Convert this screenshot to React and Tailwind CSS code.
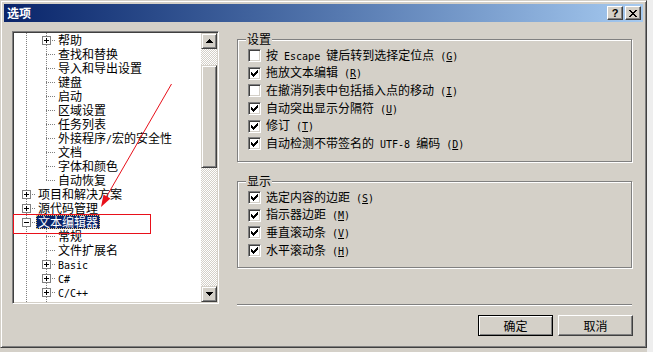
import React from "react";

const MONO = "font-['DejaVu_Sans_Mono',monospace] text-[10px] whitespace-pre";

function Mix({ text }) {
  const parts = text.split(/([\x20-\x7e]+)/).filter(Boolean);
  return parts.map((p, i) =>
    /^[\x20-\x7e]+$/.test(p) ? (
      <span key={i} className={MONO}>
        {p}
      </span>
    ) : (
      <span key={i}>{p}</span>
    )
  );
}

function Label({ text, k }) {
  return (
    <span className="whitespace-nowrap">
      <Mix text={text} />
      <span className={MONO}>
        {" ("}
        <u>{k}</u>
        {")"}
      </span>
    </span>
  );
}

function Cell({ type, box }) {
  const dot = { stroke: "#808080", strokeDasharray: "1 1" };
  return (
    <svg width="20" height="14" className="block shrink-0" shapeRendering="crispEdges">
      {(type === "line" || type === "tee") && <line x1="10.5" y1="0" x2="10.5" y2="14" {...dot} />}
      {type === "last" && <line x1="10.5" y1="0" x2="10.5" y2="8" {...dot} />}
      {(type === "tee" || type === "last") && <line x1="10" y1="7.5" x2="20" y2="7.5" {...dot} />}
      {box && (
        <>
          <rect x="6.5" y="3.5" width="8" height="8" fill="#fff" stroke="#808080" />
          <line x1="8" y1="7.5" x2="13" y2="7.5" stroke="#000" />
          {box === "plus" && <line x1="10.5" y1="5" x2="10.5" y2="10" stroke="#000" />}
        </>
      )}
    </svg>
  );
}

const rows = [
  { l: 2, t: "帮助", box: "plus" },
  { l: 2, t: "查找和替换" },
  { l: 2, t: "导入和导出设置" },
  { l: 2, t: "键盘" },
  { l: 2, t: "启动" },
  { l: 2, t: "区域设置" },
  { l: 2, t: "任务列表" },
  { l: 2, t: "外接程序/宏的安全性" },
  { l: 2, t: "文档" },
  { l: 2, t: "字体和颜色" },
  { l: 2, t: "自动恢复", last: true },
  { l: 1, t: "项目和解决方案", box: "plus" },
  { l: 1, t: "源代码管理", box: "plus" },
  { l: 1, t: "文本编辑器", box: "minus", sel: true },
  { l: 2, t: "常规" },
  { l: 2, t: "文件扩展名" },
  { l: 2, t: "Basic", box: "plus" },
  { l: 2, t: "C#", box: "plus" },
  { l: 2, t: "C/C++", box: "plus" },
  { l: 2, t: "CSS", box: "plus" },
];

const RAISED =
  "border border-t-[#d4d0c8] border-l-[#d4d0c8] border-r-[#404040] border-b-[#404040] shadow-[inset_1px_1px_0_#fff,inset_-1px_-1px_0_#808080] bg-[#d4d0c8]";
const BTN =
  "border border-t-white border-l-white border-r-[#404040] border-b-[#404040] shadow-[inset_-1px_-1px_0_#808080] bg-[#d4d0c8]";

function ScrollArrow({ up }) {
  return (
    <div className={`h-[16px] w-[16px] flex items-center justify-center ${RAISED}`}>
      <svg width="7" height="4" shapeRendering="crispEdges">
        {up ? <path d="M3 0h1v1h1v1h1v1h1v1H0V3h1V2h1V1h1z" /> : <path d="M0 0h7v1H6v1H5v1H4v1H3V3H2V2H1V1H0z" />}
      </svg>
    </div>
  );
}

function Tree() {
  return (
    <div className="ml-[8px] mt-[9px] w-[207px] h-[273px] flex border border-t-[#808080] border-l-[#808080] border-r-white border-b-white shadow-[inset_1px_1px_0_#404040,inset_-1px_-1px_0_#d4d0c8] p-[1px]">
      <div className="flex-1 bg-white overflow-hidden pl-[2px] flex flex-col">
        {rows.map((r, i) => {
          const cells =
            r.l === 1
              ? [<Cell key="a" type="tee" box={r.box} />]
              : [<Cell key="a" type="line" />, <Cell key="b" type={r.last ? "last" : "tee"} box={r.box} />];
          return (
            <div key={i} className="h-[14px] shrink-0 flex items-center">
              {cells}
              <span
                className={`h-[14px] leading-[14px] px-[2px] whitespace-nowrap ${
                  r.sel ? "bg-[#0a246a] text-white outline outline-1 outline-dotted outline-[#e8c070] -outline-offset-1" : "text-black"
                }`}
              >
                <Mix text={r.t} />
              </span>
            </div>
          );
        })}
      </div>
      <div className="w-[16px] flex flex-col">
        <ScrollArrow up />
        <div className="flex-1 bg-[repeating-conic-gradient(#d4d0c8_0_25%,#ffffff_0_50%)] bg-[length:2px_2px]">
          <div className={`mt-[16px] h-[103px] ${RAISED}`} />
        </div>
        <ScrollArrow />
      </div>
    </div>
  );
}

function Check({ on }) {
  return (
    <div className="w-[13px] h-[13px] shrink-0 bg-white border border-t-[#808080] border-l-[#808080] border-r-white border-b-white shadow-[inset_1px_1px_0_#404040,inset_-1px_-1px_0_#d4d0c8] flex items-center justify-center">
      {on && (
        <svg width="7" height="7" shapeRendering="crispEdges">
          <path d="M0 2h1v3H0zM1 3h1v3H1zM2 4h1v3H2zM3 3h1v3H3zM4 2h1v3H4zM5 1h1v3H5zM6 0h1v3H6z" fill="#000" />
        </svg>
      )}
    </div>
  );
}

function Group({ title, items, h, className = "" }) {
  return (
    <div
      className={`relative w-[395px] border border-[#808080] shadow-[inset_1px_1px_0_#fff,1px_1px_0_#fff] pt-[7px] pl-[10px] ${h} ${className}`}
    >
      <span className="absolute left-[8px] top-[-8px] px-[1px] bg-[#d4d0c8] leading-[14px]">{title}</span>
      <div className="flex flex-col">
        {items.map((it, i) => (
          <div key={i} className="h-[17.6px] flex items-center gap-[5px]">
            <Check on={it.on} />
            <span className="leading-[14px]">
              <Label text={it.t} k={it.k} />
            </span>
          </div>
        ))}
      </div>
    </div>
  );
}

const g1 = [
  { t: "按 Escape 键后转到选择定位点", k: "G", on: false },
  { t: "拖放文本编辑", k: "R", on: true },
  { t: "在撤消列表中包括插入点的移动", k: "I", on: false },
  { t: "自动突出显示分隔符", k: "U", on: true },
  { t: "修订", k: "T", on: true },
  { t: "自动检测不带签名的 UTF-8 编码", k: "D", on: true },
];
const g2 = [
  { t: "选定内容的边距", k: "S", on: true },
  { t: "指示器边距", k: "M", on: true },
  { t: "垂直滚动条", k: "V", on: true },
  { t: "水平滚动条", k: "H", on: true },
];

export default function App() {
  return (
    <div className="relative w-[653px] h-[352px] overflow-hidden flex bg-[#d4d0c8] font-['Noto_Sans_CJK_SC',sans-serif] text-[12px] text-black">
      <div className="w-[647px] h-[348px] shrink-0 flex flex-col p-[3px] bg-[#d4d0c8] border border-t-[#d4d0c8] border-l-[#d4d0c8] border-r-[#404040] border-b-[#404040] shadow-[inset_1px_1px_0_#fff,inset_-1px_-1px_0_#808080]">
        <div className="h-[18px] shrink-0 flex items-center pl-[3px] pr-[2px] bg-linear-to-r from-[#0a246a] to-[#a6caf0]">
          <span className="text-white font-bold leading-[14px]">选项</span>
          <div className="ml-auto flex gap-[2px]">
            <div className={`w-[16px] h-[14px] flex items-center justify-center ${BTN}`}>
              <span className="font-['Liberation_Sans',sans-serif] font-bold text-[11px] leading-[11px]">?</span>
            </div>
            <div className={`w-[16px] h-[14px] flex items-center justify-center ${BTN}`}>
              <svg width="8" height="7" shapeRendering="crispEdges">
                <path d="M0 0h2v1h1v1h2V1h1V0h2v1H7v1H6v1H5v1h1v1h1v1h1v1H6V6H5V5H3v1H2v1H0V6h1V5h1V4h1V3H2V2H1V1H0z" fill="#000" />
              </svg>
            </div>
          </div>
        </div>
        <div className="flex-1 flex">
          <Tree />
          <div className="ml-[18px] w-[396px] flex flex-col">
            <Group title="设置" items={g1} h="h-[123px]" className="mt-[17px]" />
            <Group title="显示" items={g2} h="h-[87px]" className="mt-[19px]" />
            <div className="mt-[36px] w-[395px] h-[2px] border-t border-t-[#808080] border-b border-b-white" />
            <div className="mt-[9px] flex justify-end gap-[5px]">
              <div className="w-[75px] h-[21px] border border-black shadow-[inset_1px_1px_0_#fff,inset_-1px_-1px_0_#808080] flex items-center justify-center leading-[14px]">
                确定
              </div>
              <div className={`w-[75px] h-[21px] flex items-center justify-center leading-[14px] ${BTN}`}>取消</div>
            </div>
          </div>
        </div>
      </div>
      <div className="flex-1 bg-[#eeeeee]" />
      <svg className="absolute left-0 top-0 pointer-events-none" width="653" height="352">
        <rect x="13.5" y="214.5" width="137" height="19" fill="none" stroke="#e8101a" />
        <line x1="171.5" y1="84" x2="104" y2="201" stroke="#e8101a" />
        <polygon points="101,207 110.4,198.6 103.5,194.6" fill="#e8101a" />
      </svg>
    </div>
  );
}
